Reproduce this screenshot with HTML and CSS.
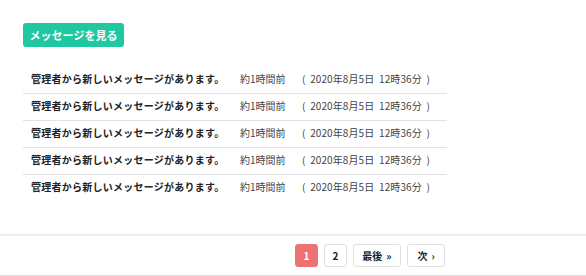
FILE: index.html
```html
<!DOCTYPE html>
<html lang="ja">
<head>
<meta charset="utf-8">
<link rel="stylesheet" href="styles.css">
</head>
<body>
<div class="page">
  <div class="main">
    <a class="btn-primary">メッセージを見る</a>
    <ul class="msg-list">
      <li class="msg-row"><span class="msg-title">管理者から新しいメッセージがあります。</span><span class="msg-ago">約1時間前</span><span class="msg-date">(&nbsp;&nbsp;2020年8月5日&nbsp;&nbsp;12時36分&nbsp;&nbsp;)</span></li>
      <li class="msg-row"><span class="msg-title">管理者から新しいメッセージがあります。</span><span class="msg-ago">約1時間前</span><span class="msg-date">(&nbsp;&nbsp;2020年8月5日&nbsp;&nbsp;12時36分&nbsp;&nbsp;)</span></li>
      <li class="msg-row"><span class="msg-title">管理者から新しいメッセージがあります。</span><span class="msg-ago">約1時間前</span><span class="msg-date">(&nbsp;&nbsp;2020年8月5日&nbsp;&nbsp;12時36分&nbsp;&nbsp;)</span></li>
      <li class="msg-row"><span class="msg-title">管理者から新しいメッセージがあります。</span><span class="msg-ago">約1時間前</span><span class="msg-date">(&nbsp;&nbsp;2020年8月5日&nbsp;&nbsp;12時36分&nbsp;&nbsp;)</span></li>
      <li class="msg-row"><span class="msg-title">管理者から新しいメッセージがあります。</span><span class="msg-ago">約1時間前</span><span class="msg-date">(&nbsp;&nbsp;2020年8月5日&nbsp;&nbsp;12時36分&nbsp;&nbsp;)</span></li>
    </ul>
  </div>
  <div class="footer">
    <nav class="pager">
      <span class="pg pg-active">1</span>
      <span class="pg">2</span>
      <span class="pg pg-last">最後 <span class="arr">»</span></span>
      <span class="pg pg-next">次 <span class="arr">›</span></span>
    </nav>
  </div>
</div>
</body>
</html>
```
FILE: styles.css
```css
* { box-sizing: border-box; }
html, body { margin: 0; padding: 0; background: #fff; }
body {
  font-family: "Noto Sans CJK JP", "Noto Sans", sans-serif;
  color: #333;
  width: 586px;
  height: 276px;
  overflow: hidden;
}
.page { display: flex; flex-direction: column; }
.main {
  padding: 23px 0 0 23px;
  height: 234px;
  display: flex;
  flex-direction: column;
  align-items: flex-start;
}
.btn-primary {
  display: inline-flex;
  align-items: center;
  justify-content: center;
  width: 101px;
  height: 24px;
  background: #1fc8a0;
  color: #fff;
  font-size: 11px;
  font-weight: 700;
  border-radius: 3px;
  text-decoration: none;
}
.msg-list {
  list-style: none;
  margin: 20px 0 0 0;
  padding: 0;
  width: 424px;
}
.msg-row {
  display: flex;
  align-items: center;
  height: 27px;
  padding: 0 0 3px 8px;
  border-bottom: 1px solid #e2e2e2;
  font-size: 10px;
  line-height: 14px;
  white-space: nowrap;
}
.msg-row:last-child { border-bottom: none; }
.msg-title { font-weight: 700; color: #222; width: 209px; letter-spacing: 0.25px; }
.msg-ago { color: #444; width: 62px; }
.msg-date { color: #444; letter-spacing: 0.1px; }
.footer {
  border-top: 2px solid #eee;
  border-bottom: 1px solid #ddd;
  height: 42px;
  display: flex;
  align-items: center;
}
.pager {
  width: 445px;
  display: flex;
  justify-content: flex-end;
  gap: 6px;
}
.pg {
  display: inline-flex;
  align-items: center;
  justify-content: center;
  height: 23px;
  width: 23px;
  border: 1px solid #e0e0e0;
  border-radius: 3px;
  font-size: 10px;
  font-weight: 700;
  color: #222;
  background: #fff;
}
.pg-active { background: #ef7272; border-color: #ef7272; color: #fff; }
.pg-last { width: 48px; }
.pg-next { width: 38px; }
.arr { margin-left: 4px; font-size: 10px; }
```
